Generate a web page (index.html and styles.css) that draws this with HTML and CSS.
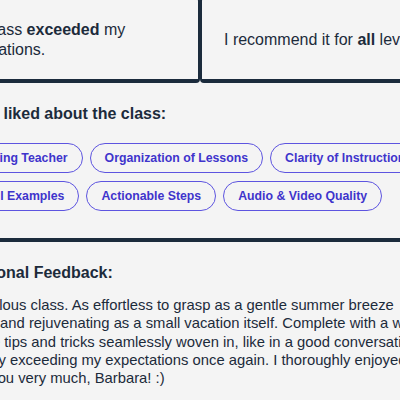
FILE: index.html
```html
<!DOCTYPE html>
<html lang="en">
<head>
<meta charset="utf-8">
<title>Class review</title>
<link rel="stylesheet" href="styles.css">
</head>
<body>
<main class="page">
  <section class="cards">
    <div class="card"><p>This class <b>exceeded</b> my expectations.</p></div>
    <div class="card"><p>I recommend it for <b>all</b> levels.</p></div>
  </section>
  <section class="liked">
    <h2>What I liked about the class:</h2>
    <ul class="chips">
      <li>Inspiring Teacher</li>
      <li>Organization of Lessons</li>
      <li>Clarity of Instruction</li>
      <li>Useful Examples</li>
      <li>Actionable Steps</li>
      <li>Audio &amp; Video Quality</li>
    </ul>
  </section>
  <section class="feedback">
    <h2>Additional Feedback:</h2>
    <p>A marvelous class. As effortless to grasp as a gentle summer breeze<br>calming and rejuvenating as a small vacation itself. Complete with a wealth of<br>valuable tips and tricks seamlessly woven in, like in a good conversation.<br>Definitely exceeding my expectations once again. I thoroughly enjoyed it.<br>Thank you very much, Barbara! :)</p>
  </section>
</main>
</body>
</html>
```
FILE: styles.css
```css
html, body {
  margin: 0;
  padding: 0;
}
body {
  background: #f4f4f4;
  color: #1c2b3b;
  font-family: "Liberation Sans", Arial, Helvetica, sans-serif;
  overflow: hidden;
  width: 400px;
  height: 400px;
}
.page {
  margin-left: -49px;
  width: 600px;
}
.cards {
  display: grid;
  grid-template-columns: 273px 273px;
  margin: -3px 0 0 -24px;
}
.card {
  display: flex;
  align-items: center;
  border: 2px solid #1b2b3c;
  border-bottom-width: 4px;
  border-radius: 4px;
  padding: 21px 22px 19px;
  font-size: 16px;
  line-height: 20px;
}
.card p {
  margin: 0;
}
.card b {
  font-weight: 700;
}
.liked {
  margin-top: 22px;
}
h2 {
  margin: 0;
  font-size: 16px;
  line-height: 18px;
  font-weight: 700;
}
.chips {
  list-style: none;
  margin: 20px 0 0;
  padding: 0;
  display: flex;
  flex-wrap: wrap;
  gap: 8px 7px;
  max-width: 500px;
}
.chips li {
  box-sizing: border-box;
  height: 30px;
  display: flex;
  align-items: center;
  padding: 0 14px;
  border: 1.5px solid #5d54e0;
  border-radius: 999px;
  font-size: 12.3px;
  font-weight: 700;
  color: #3f34cc;
  white-space: nowrap;
}
.feedback {
  margin-top: 27px;
  border-top: 4px solid #1b2b3c;
  padding-top: 22px;
}
.feedback p {
  margin: 14px 0 0 -6px;
  font-size: 14.8px;
  line-height: 18.3px;
  white-space: nowrap;
}
```
